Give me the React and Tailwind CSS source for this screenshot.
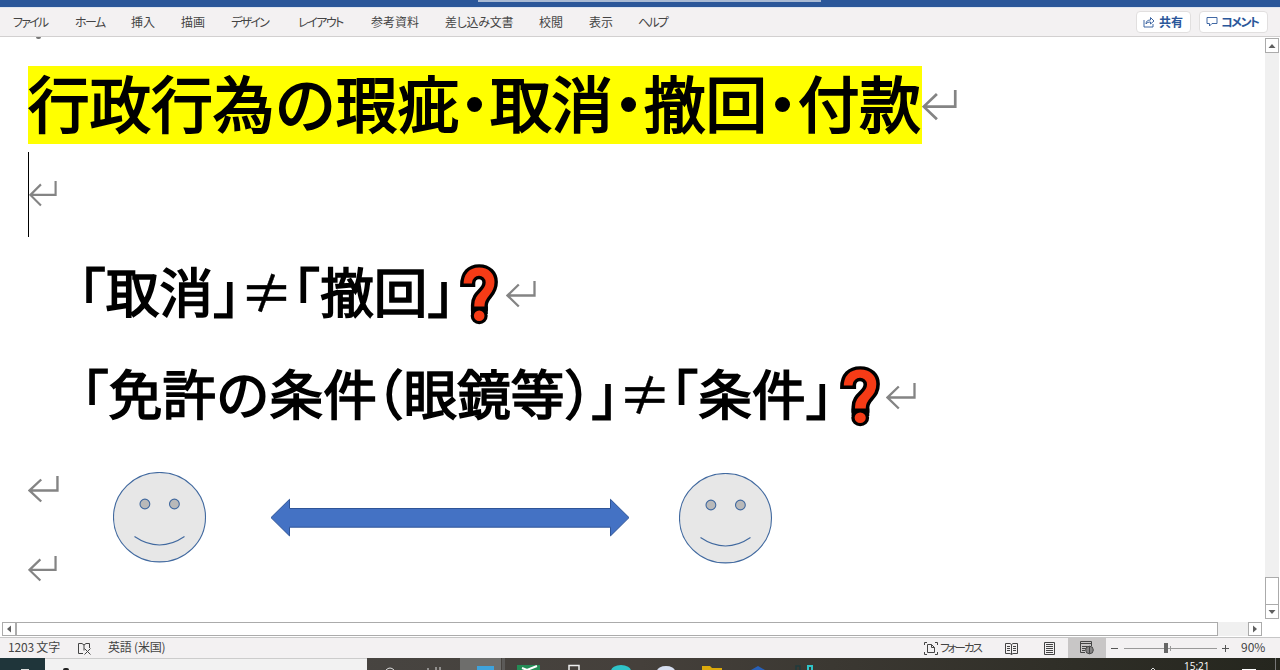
import clsx from 'clsx';

const MENU = [
  { label: 'ファイル', box: 'w-[62px]', text: 'tracking-[-1.8px]' },
  { label: 'ホーム', box: 'w-[56px]', text: 'tracking-[-1.6px]' },
  { label: '挿入', box: 'w-[50px]', text: '' },
  { label: '描画', box: 'w-[50px]', text: '' },
  { label: 'デザイン', box: 'w-[67px]', text: 'tracking-[-1.7px]' },
  { label: 'レイアウト', box: 'w-[73px]', text: 'tracking-[-1.5px]' },
  { label: '参考資料', box: 'w-[74px]', text: '' },
  { label: '差し込み文書', box: 'w-[94px]', text: 'tracking-[-0.3px]' },
  { label: '校閲', box: 'w-[50px]', text: '' },
  { label: '表示', box: 'w-[49px]', text: '' },
  { label: 'ヘルプ', box: 'w-[40px]', text: 'tracking-[-1.8px]' },
];

const ReturnMark = ({ className }) => (
  <svg viewBox="0 0 30 27" preserveAspectRatio="none" className={clsx('shrink-0', className)} fill="none" stroke="#848484" strokeWidth="2.3">
    <path d="M28.5 0V14.5H1.5M12.8 3.5L1.5 14.5L12.8 25.5" />
  </svg>
);

const QuestionMark = ({ className }) => (
  <svg viewBox="0 0 38 61" preserveAspectRatio="none" className={clsx('shrink-0', className)}>
    <path d="M1.8 21.2C1.8 9 8.5 1.9 19.2 1.9C29.5 1.9 36.2 9 36.2 18C36.2 32 26.2 32.5 26.2 41.5V45H12.6V41C12.6 28 24 26.5 24 18.5C24 11.8 14 11.8 13.6 19V21.2Z" fill="#f53b16" stroke="#000" strokeWidth="3.4" />
    <path d="M11 42.5H27.8V50H11Z" fill="#000" />
    <circle cx="19.2" cy="51.8" r="6.9" fill="#f53b16" stroke="#000" strokeWidth="3.2" />
  </svg>
);

const Smiley = ({ className }) => (
  <svg viewBox="0 0 94 91" className={clsx('absolute h-[91px] w-[94px]', className)} stroke="#41699f" strokeWidth="1.1">
    <ellipse cx="46.5" cy="45.2" rx="46" ry="44.7" fill="#e7e7e7" />
    <circle cx="31.9" cy="32" r="4.9" fill="#b9b9b9" />
    <circle cx="61.4" cy="32" r="4.9" fill="#b9b9b9" />
    <path d="M21.5 64.5Q46.5 81.5 71.5 64.5" fill="none" />
  </svg>
);

const DoubleArrow = () => (
  <svg viewBox="0 0 360 40" className="absolute left-[270px] top-[461px] h-10 w-[360px]" fill="#4472c4" stroke="#2f5597" strokeWidth="1">
    <path d="M1 19.6L19.5 1.3V10.5H340.5V1.3L359 19.6L340.5 37.9V29.2H19.5V37.9Z" />
  </svg>
);

const Ribbon = () => (
  <header>
    <div className="flex h-[7px] bg-[#2b579a]">
      <div className="ml-[478px] h-[2px] w-[343px] bg-[#a9bad4]" />
    </div>
    <div className="flex h-[30px] items-center border-b border-[#d2d0d0] border-t border-t-[#dfe6f1] bg-[#f3f1f2] pl-[13px] pr-3">
      <nav className="flex flex-1 text-xs text-[#444] [font-feature-settings:'palt']">
        {MENU.map((item) => (
          <div key={item.label} className={clsx('shrink-0 whitespace-nowrap', item.box, item.text)}>
            {item.label}
          </div>
        ))}
      </nav>
      <div className="flex gap-2 text-xs font-bold text-[#2b579a] [font-feature-settings:'palt']">
        <button className="flex h-[22px] w-[55px] items-center gap-1 whitespace-nowrap rounded-sm border border-[#e1dfdf] bg-white pl-1.5">
          <svg viewBox="0 0 12 12" className="h-3 w-3 shrink-0" fill="none" stroke="currentColor" strokeWidth="0.9">
            <path d="M1 4V11H10V8M3 8C3 5 5 4 7.5 4V1.5L11 5L7.5 8V6C5.5 6 4 6.5 3 8Z" />
          </svg>
          共有
        </button>
        <button className="flex h-[22px] w-[69px] items-center gap-[3px] whitespace-nowrap rounded-sm border border-[#e1dfdf] bg-white pl-[6px] tracking-[-1.5px]">
          <svg viewBox="0 0 12 12" className="h-3 w-3 shrink-0" fill="none" stroke="currentColor" strokeWidth="0.9">
            <path d="M1 1.5H11V7.5H6L3.5 10V7.5H1Z" />
          </svg>
          コメント
        </button>
      </div>
    </div>
  </header>
);

const Page = () => (
  <main className="relative flex-1 overflow-hidden bg-white text-black">
    <div className="ml-[36px] h-[2px] w-[5px] rounded-b-full bg-[#777]" />
    <div className="ml-7 mt-[27px] flex h-[78px] items-center">
      <h1 className="flex h-[78px] w-[894px] items-center whitespace-nowrap bg-[#ffff00] pb-[7px] text-[61.6px] font-normal leading-none [-webkit-text-stroke:1.9px_black] [font-feature-settings:'halt']">
        行政行為の瑕疵・取消・撤回・付款
      </h1>
      <ReturnMark className="h-[31px] w-[35px]" />
    </div>
    <div className="ml-7 mt-2 flex h-[85px] items-center border-l border-black pb-[2px]">
      <ReturnMark className="h-[26px] w-7" />
    </div>
    <div className="ml-[79px] mt-[27px] flex h-[60px] items-center whitespace-nowrap text-[53.6px] leading-none [font-feature-settings:'halt']">
      <span className="pb-[8px] [-webkit-text-stroke:1.7px_black]">「取消」</span>
      <span className="pb-[8px] [-webkit-text-stroke:0.4px_black]">≠</span>
      <span className="pb-[8px] [-webkit-text-stroke:1.7px_black]">「撤回」</span>
      <QuestionMark className="ml-[6px] h-[61px] w-[38px]" />
      <ReturnMark className="ml-[8px] h-[27px] w-[30px]" />
    </div>
    <div className="ml-[82px] mt-[42px] flex h-[60px] items-center whitespace-nowrap text-[53.6px] leading-none [font-feature-settings:'halt']">
      <span className="pb-[8px] [-webkit-text-stroke:1.7px_black]">「免許の条件（眼鏡等）」</span>
      <span className="pb-[8px] [-webkit-text-stroke:0.4px_black]">≠</span>
      <span className="pb-[8px] [-webkit-text-stroke:1.7px_black]">「条件」</span>
      <QuestionMark className="ml-[8px] h-[61px] w-[40px]" />
      <ReturnMark className="ml-[6px] h-[27px] w-[30px]" />
    </div>
    <ReturnMark className="ml-7 mt-[50px] h-[27px] w-[31px]" />
    <ReturnMark className="ml-7 mt-[53px] h-[26px] w-[29px]" />
    <Smiley className="left-[113px] top-[435px]" />
    <DoubleArrow />
    <Smiley className="left-[679px] top-[436px]" />
  </main>
);

const ScrollButton = ({ d, className }) => (
  <div className={clsx('flex shrink-0 items-center justify-center border border-[#ababab] bg-white', className)}>
    <svg viewBox="0 0 8 8" className="h-2 w-2" fill="#606060">
      <path d={d} />
    </svg>
  </div>
);

const VerticalScroll = () => (
  <div className="flex w-[15px] flex-col pr-px pt-px">
    <ScrollButton d="M.5 6L4 2L7.5 6Z" className="h-[15px]" />
    <div className="flex-1 bg-[#f0f0f0]" />
    <div className="h-7 border border-[#ababab] bg-white" />
    <ScrollButton d="M.5 2L4 6L7.5 2Z" className="-mt-px mb-[3px] h-[15px]" />
  </div>
);

const HorizontalScroll = () => (
  <div className="flex h-[15px] bg-white pb-px pl-[2px] pr-[18px]">
    <ScrollButton d="M6 .5L2 4L6 7.5Z" className="w-[14px]" />
    <div className="w-[1202px] border border-[#ababab] bg-white" />
    <div className="flex-1 bg-[#f0f0f0]" />
    <ScrollButton d="M2 .5L6 4L2 7.5Z" className="w-[14px]" />
  </div>
);

const StatusBar = () => (
  <div className="flex h-[21px] items-center border-t border-[#c6c6c6] bg-[#f3f1f2] text-xs text-[#444] [font-feature-settings:'palt']">
    <span className="ml-2 w-[69px] whitespace-nowrap pb-0.5 tracking-[-0.2px]">1203 文字</span>
    <svg viewBox="0 0 15 13" className="h-[13px] w-[15px]" fill="none" stroke="#444" strokeWidth="1">
      <path d="M6 11.5H1.5V1.5H5L7 3V8.5M7 3L9 1.5H12.5V6M7.5 6.5L13.5 12.5M13.5 6.5L7.5 12.5" />
    </svg>
    <span className="ml-4 whitespace-nowrap pb-0.5 tracking-[-0.2px]">英語 (米国)</span>
    <div className="ml-auto flex h-full items-center">
      <svg viewBox="0 0 14 13" className="h-[13px] w-[14px]" fill="none" stroke="#444" strokeWidth="1">
        <path d="M3 .5H.5V3M11 .5H13.5V3M3 12.5H.5V10M11 12.5H13.5V10M3.5 2.5H7.5L10.5 5.5V10.5H3.5ZM7.5 2.5V5.5H10.5" />
      </svg>
      <span className="w-[67px] whitespace-nowrap pl-0.5 text-[11.5px] tracking-[-2px]">フォーカス</span>
      <svg viewBox="0 0 13 13" className="h-[13px] w-[13px]" fill="none" stroke="#444" strokeWidth="1">
        <path d="M6.5 2.5L5 1.5H.5V11.5H5L6.5 12.5L8 11.5H12.5V1.5H8L6.5 2.5V12.5M2 4.5H5M2 6.5H5M2 8.5H5M8 4.5H11M8 6.5H11M8 8.5H11" />
      </svg>
      <svg viewBox="0 0 11 13" className="ml-[26px] h-[13px] w-[11px]" fill="none" stroke="#444" strokeWidth="1">
        <path d="M.5 .5H10.5V12.5H.5ZM2 2.5H9M2 4.5H9M2 6.5H9M2 8.5H9M2 10.5H9" />
      </svg>
      <div className="ml-[13px] flex h-full w-[38px] items-center justify-center bg-[#c8c6c6]">
        <svg viewBox="0 0 14 14" className="h-[14px] w-[14px]" fill="none" stroke="#444" strokeWidth="1">
          <path d="M5 11.5H.5V.5H11.5V5M.5 2.5H11.5M2 5.5H8M2 7.5H6M2 9.5H5" />
          <circle cx="9.5" cy="9" r="3.8" fill="#c8c6c6" />
          <path d="M5.7 9H13.3M9.5 5.2V12.8M6.5 7H12.5M6.5 11H12.5" />
        </svg>
      </div>
      <div className="ml-[5px] h-px w-[7px] bg-[#555]" />
      <div className="ml-[6px] flex w-[93px] items-center">
        <div className="h-px w-[40px] bg-[#999]" />
        <div className="h-[10px] w-[4px] bg-[#666]" />
        <div className="h-px w-[2px] bg-[#999]" />
        <div className="h-[5px] w-px bg-[#999]" />
        <div className="h-px flex-1 bg-[#999]" />
      </div>
      <svg viewBox="0 0 7 7" className="ml-[5px] h-[7px] w-[7px]" stroke="#555">
        <path d="M0 3.5H7M3.5 0V7" />
      </svg>
      <span className="w-[51px] pb-0.5 pl-3">90%</span>
    </div>
  </div>
);

// only the top edge of the taskbar is visible
const Taskbar = () => (
  <footer className="flex h-3 items-start overflow-hidden bg-gradient-to-r from-[#4a4a48] via-[#45403b] to-[#25261e]">
    <div className="flex h-3 w-[45px] items-end justify-end bg-[#1f353a] pr-4">
      <div className="h-px w-2 bg-[#ddd]" />
    </div>
    <div className="flex h-3 w-[322px] items-end border-t border-[#ccc] bg-[#f2f2f2] pl-[18px]">
      <div className="h-[2px] w-[6px] rounded-t-full bg-[#222]" />
    </div>
    <svg viewBox="0 0 913 12" className="h-3 w-[817px]" preserveAspectRatio="xMinYMin slice" fill="none">
      <path d="M93 0H134V12H93Z" fill="#6e6e6c" />
      <path d="M135 0H138V12H135Z" fill="#5b5a58" />
      <path d="M19 12Q23 8 27 12M61 10V12M69 9V12M73 9V12" stroke="#ddd" />
      <path d="M110 8H127V12H110Z" fill="#3fa3dc" />
      <path d="M150 7H173V12H150Z" fill="#248c56" />
      <path d="M155 10L160 12L170 8" stroke="#fff" strokeWidth="2" />
      <path d="M202 12V7.5H212V12" stroke="#eee" strokeWidth="1.5" />
      <ellipse cx="254" cy="13" rx="10" ry="6" fill="#2fc4c8" />
      <ellipse cx="299" cy="13" rx="9" ry="5" fill="#d6def0" />
      <path d="M335 10V8H343L345 10H355V12H335Z" fill="#dba90c" />
      <path d="M384 12L391 8L398 12Z" fill="#2860b8" />
      <path d="M429 12V8H433V12" stroke="#203b3c" strokeWidth="1.5" />
      <path d="M441 12V8H445V12" stroke="#2fc4c8" strokeWidth="2" />
      <path d="M784 12L786 10L788 12" stroke="#ddd" />
    </svg>
    <span className="mt-[4px] h-2 w-[58px] font-['Open_Sans',sans-serif] text-[10px] leading-[8px] text-white">15:21</span>
    <div className="mt-[11px] h-px w-[14px] bg-white" />
    <div className="ml-[19px] h-3 w-px bg-[#777]" />
  </footer>
);

export default function App() {
  return (
    <div className="flex h-[670px] w-[1280px] flex-col overflow-hidden bg-white font-['Noto_Sans_CJK_JP',sans-serif]">
      <Ribbon />
      <div className="flex h-[585px]">
        <Page />
        <VerticalScroll />
      </div>
      <HorizontalScroll />
      <StatusBar />
      <Taskbar />
    </div>
  );
}
